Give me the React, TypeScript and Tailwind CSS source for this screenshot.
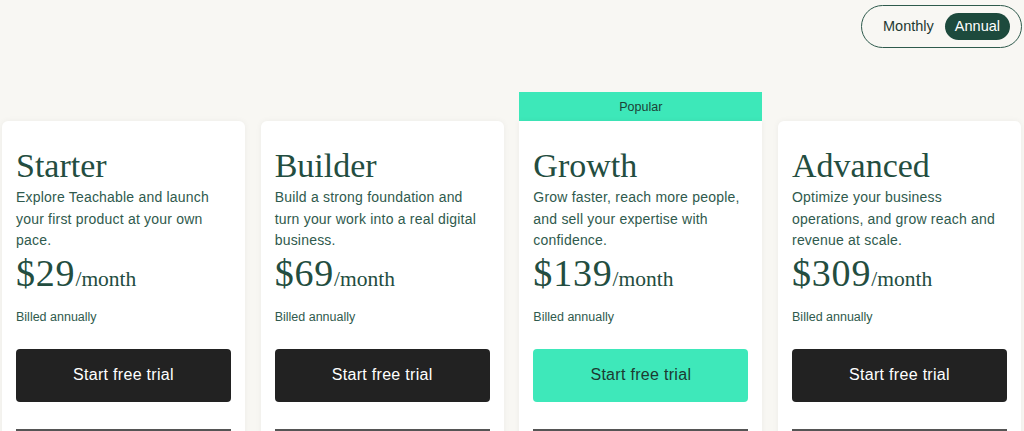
const plans = [
  {
    name: 'Starter',
    desc: 'Explore Teachable and launch your first product at your own pace.',
    price: '$29',
  },
  {
    name: 'Builder',
    desc: 'Build a strong foundation and turn your work into a real digital business.',
    price: '$69',
  },
  {
    name: 'Growth',
    desc: 'Grow faster, reach more people, and sell your expertise with confidence.',
    price: '$139',
    popular: true,
  },
  {
    name: 'Advanced',
    desc: 'Optimize your business operations, and grow reach and revenue at scale.',
    price: '$309',
  },
]

export default function App() {
  return (
    <div className="h-[431px] overflow-hidden bg-[#f8f7f3] font-['Liberation_Sans',Arial,sans-serif]">
      {/* billing toggle */}
      <div className="flex justify-end pr-[2px] pt-[5px]">
        <div className="flex h-[43px] w-[161px] items-center rounded-full border border-[#2e5a4c] pl-[21px] pr-[11px]">
          <span className="text-[14.5px] text-[#1f3a32]">Monthly</span>
          <span className="ml-auto flex h-[27px] items-center rounded-full bg-[#1d4a3d] px-[10px] text-[14.5px] text-white">
            Annual
          </span>
        </div>
      </div>

      <div className="mt-[44px] grid grid-cols-4 gap-[15.7px] pl-[2px] pr-[3px]">
        {plans.map((p) => (
          <div key={p.name} className="flex flex-col">
            <div
              className={`flex h-[29px] items-center justify-center pt-[1px] text-[12.5px] text-[#1c4136] ${p.popular ? 'bg-[#3de8b9]' : ''}`}
            >
              {p.popular ? 'Popular' : ''}
            </div>
            <div
              className={`h-[400px] bg-white px-[14px] pt-[28px] shadow-[0_0_6px_rgba(0,0,0,0.05)] ${p.popular ? '' : 'rounded-t-[6px]'}`}
            >
              <h2 className="font-['Liberation_Serif',Georgia,serif] text-[34px] leading-[34px] text-[#234d40]">
                {p.name}
              </h2>
              <p className="mt-[4px] text-[14px] leading-[21.5px] tracking-[0.2px] text-[#2f5a4d]">{p.desc}</p>
              <div className="mt-[1px] flex items-baseline font-['Liberation_Serif',Georgia,serif] text-[#234d40]">
                <span className="text-[38px] leading-[40px] tracking-[0.8px]">{p.price}</span>
                <span className="text-[21.5px]">/month</span>
              </div>
              <p className="mt-[13px] text-[12.5px] text-[#2f5a4d]">Billed annually</p>
              <button
                className={`mt-[22px] flex h-[53px] w-full items-center justify-center rounded-[4px] text-[16px] tracking-[0.3px] ${p.popular ? 'bg-[#3ee8ba] text-[#1c3a31]' : 'bg-[#222222] text-white'}`}
              >
                Start free trial
              </button>
              <div className="mt-[27px] h-[2px] bg-[#555555]" />
            </div>
          </div>
        ))}
      </div>
    </div>
  )
}
